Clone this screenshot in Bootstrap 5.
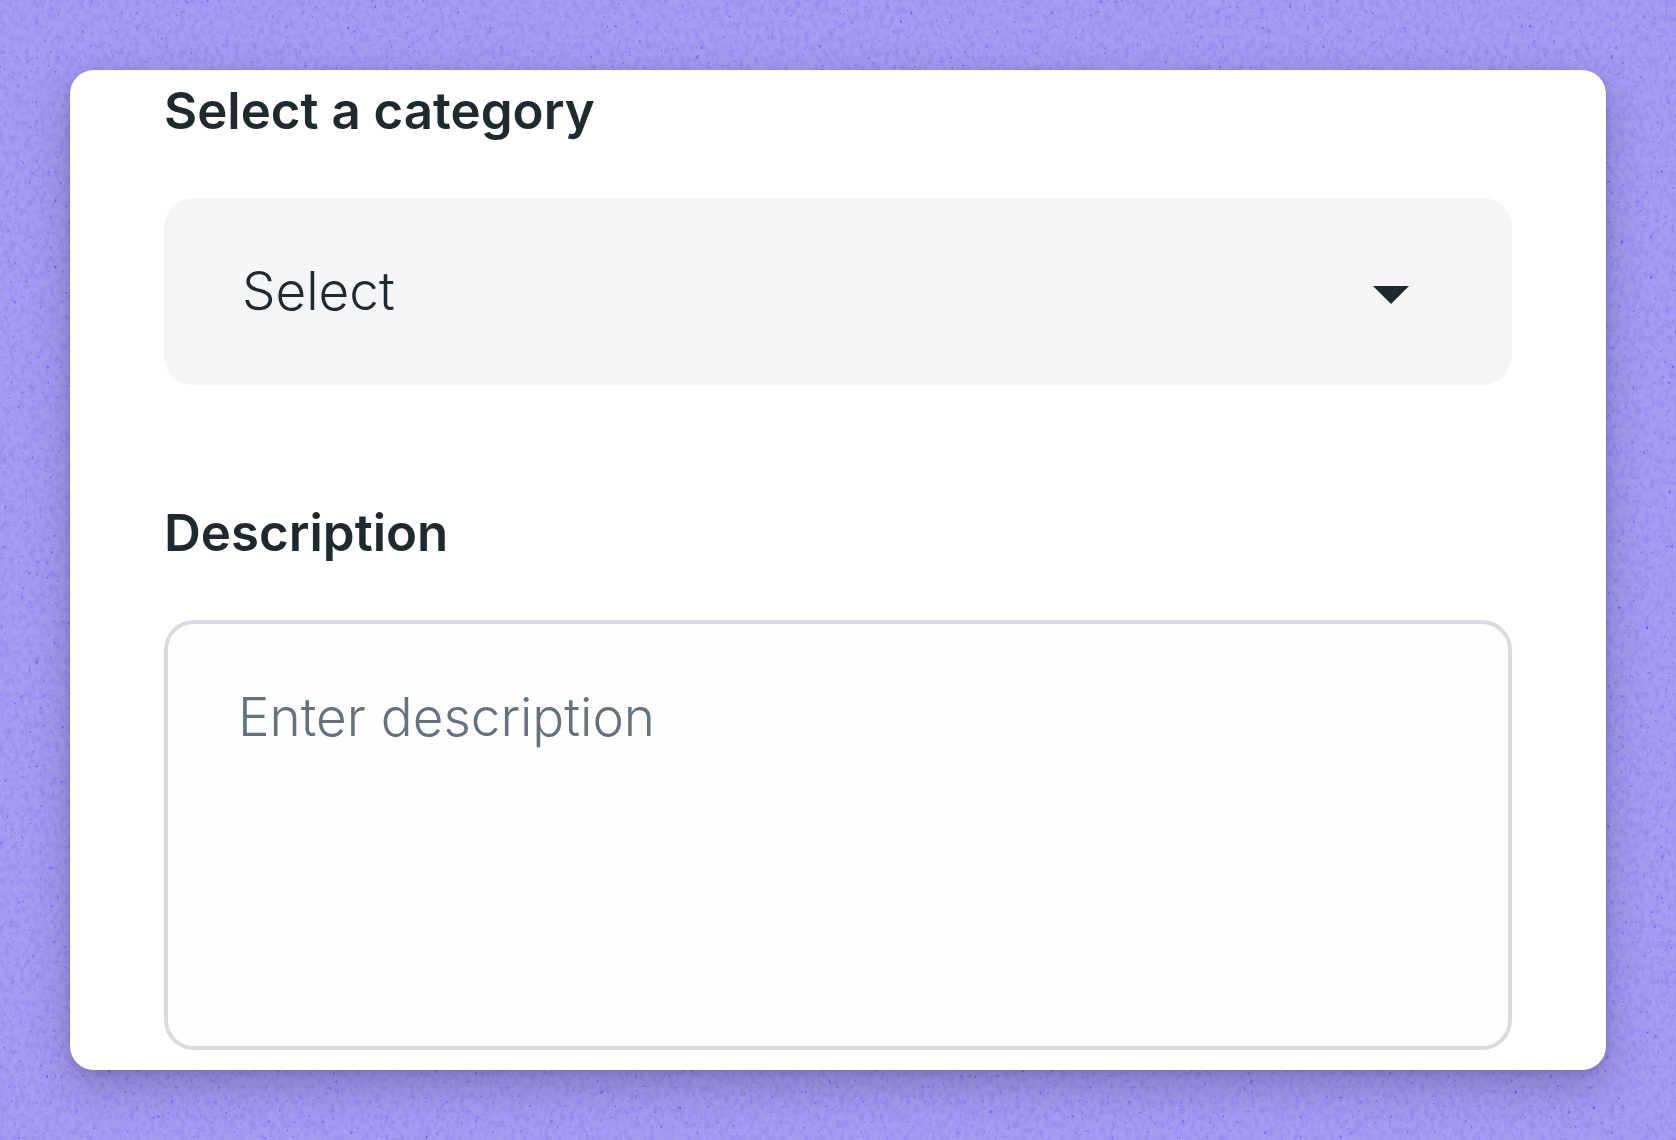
<!DOCTYPE html>
<html lang="en">
<head>
<meta charset="utf-8">
<meta name="viewport" content="width=device-width, initial-scale=1">
<title>Select a category</title>
<link rel="stylesheet" href="https://cdn.jsdelivr.net/npm/bootstrap@5.3.0/dist/css/bootstrap.min.css">
<style>
  body {
    font-family: Inter, "Noto Sans", sans-serif;
    background: #a59df2;
    color: #1f292e;
  }
  .page-shell { padding: 70px; }
  .grain { z-index: -1; }
  .form-panel {
    border-radius: 24px;
    padding: 11px 94px 20px;
    box-shadow: 0 16px 40px rgba(40, 30, 70, .26), 0 2px 10px rgba(40, 30, 70, .16);
  }
  .field-label { font-size: 51px; line-height: 60px; font-weight: 600; }
  .form-panel .form-select,
  .form-panel .form-control {
    font-size: 53px;
    font-weight: 300;
    line-height: 60px;
    border-radius: 30px;
  }
  .form-panel .form-select {
    height: 187px;
    padding: 0 160px 2px 78px;
    border: 0;
    color: #1f292e;
    background-color: #f4f5f7;
    background-image: url("data:image/svg+xml,%3csvg xmlns='http://www.w3.org/2000/svg' viewBox='0 0 36 18'%3e%3cpath fill='%231f292e' d='M0 0h36L18 18z'/%3e%3c/svg%3e");
    background-position: right 103px top 88px;
    background-size: 36px 18px;
  }
  .form-panel .form-control {
    padding: 63px 70px;
    border: 4px solid #d8dbdf;
    color: #1f292e;
    background-color: #fefefe;
    resize: none;
  }
  .form-panel .form-control::placeholder { color: #65727e; }
  .field-gap { margin-bottom: 118px; }
  .label-gap { margin-bottom: 57px; }
</style>
</head>
<body>
<svg class="grain position-fixed top-0 start-0 w-100 h-100" aria-hidden="true">
  <defs>
    <filter id="paper" x="0" y="0" width="100%" height="100%" color-interpolation-filters="sRGB">
      <feTurbulence type="fractalNoise" baseFrequency="0.2 0.14" numOctaves="4" seed="7"/>
      <feColorMatrix values="0 0 0 0 .38  0 0 0 0 .3  0 0 0 0 .88  .5 0 0 0 -.21"/>
    </filter>
    <filter id="specks" x="0" y="0" width="100%" height="100%" color-interpolation-filters="sRGB">
      <feTurbulence type="fractalNoise" baseFrequency="0.28 0.2" numOctaves="3" seed="21"/>
      <feColorMatrix values="0 0 0 0 .32  0 0 0 0 .22  0 0 0 0 .9  0 3 0 0 -2.1"/>
    </filter>
  </defs>
  <rect width="100%" height="100%" filter="url(#paper)"/>
  <rect width="100%" height="100%" filter="url(#specks)"/>
</svg>
<main class="page-shell d-flex flex-column min-vh-100">
  <form class="form-panel bg-white d-flex flex-column flex-grow-1">
    <div class="field-gap">
      <label class="field-label label-gap d-block" for="category">Select a category</label>
      <select class="form-select" id="category">
        <option selected>Select</option>
      </select>
    </div>
    <div class="d-flex flex-column flex-grow-1">
      <label class="field-label label-gap d-block" for="description">Description</label>
      <textarea class="form-control flex-grow-1" id="description" placeholder="Enter description"></textarea>
    </div>
  </form>
</main>
<script src="https://cdn.jsdelivr.net/npm/bootstrap@5.3.0/dist/js/bootstrap.bundle.min.js"></script>
</body>
</html>
